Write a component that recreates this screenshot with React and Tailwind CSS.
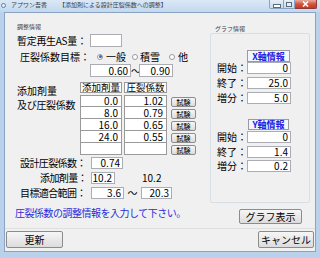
import React from "react"

const jp = "font-['Noto_Sans_CJK_JP','Noto_Sans_CJK_SC',sans-serif]"

function Field({ w, h = "h-[12px]", children, className = "" }) {
  return (
    <div
      className={`${w} ${h} flex shrink-0 items-center justify-end border border-[#abadb3] bg-white pr-[2px] text-[10px] leading-[10px] text-black ${className}`}
    >
      {children}
    </div>
  )
}

function Btn({ className = "", children }) {
  return (
    <div
      className={`flex shrink-0 items-center justify-center rounded-[2px] border border-[#8c8c8c] bg-gradient-to-b from-[#f6f6f6] to-[#dcdcdc] text-black ${className}`}
    >
      {children}
    </div>
  )
}

function Radio({ on }) {
  return (
    <div className="flex h-[6px] w-[6px] shrink-0 items-center justify-center rounded-full border border-[#9a9a9a] bg-white">
      {on && <div className="h-[3px] w-[3px] rounded-full bg-[#2a6fcf]" />}
    </div>
  )
}

function AxisRow({ label, value, mt }) {
  return (
    <div className={`flex h-[12px] items-center ${mt}`}>
      <span className="w-[36px] shrink-0 pl-[6px] text-[10px] leading-[12px]">{label}</span>
      <Field w="w-[44px]">{value}</Field>
    </div>
  )
}

const rows = [
  ["0.0", "1.02"],
  ["8.0", "0.79"],
  ["16.0", "0.65"],
  ["24.0", "0.55"],
  ["", ""],
]

export default function App() {
  return (
    <div className={`flex h-[258px] w-[320px] flex-col overflow-hidden whitespace-nowrap bg-[#b9d1ea] ${jp}`}>
      {/* title bar */}
      <div className="flex h-[12px] items-start bg-gradient-to-b from-[#dbe8f6] to-[#c3d8ee]">
        <div className="ml-[1px] mt-[3px] h-[5px] w-[5px] rounded-full border border-[#5b7fa8] bg-[#e8f0f8]" />
        <span className="ml-[5px] mt-[1px] text-[6px] leading-[8px] text-[#3c3c3c]">アプワン吾香</span>
        <span className="ml-[12px] mt-[1px] text-[6px] leading-[8px] text-[#3c3c3c]">【添加剤による設計圧裂係数への調整】</span>
        <div className="ml-auto mr-[3px] flex h-[9px]">
          <div className="flex w-[15px] items-center justify-center rounded-bl-[2px] border border-t-0 border-[#8aa3c0] bg-gradient-to-b from-[#e6eef7] to-[#c9d9eb]">
            <div className="mt-[3px] h-[2px] w-[6px] bg-white shadow-[0_0_0_1px_#5a6b80]" />
          </div>
          <div className="flex w-[11px] items-center justify-center border-b border-r border-[#8aa3c0] bg-gradient-to-b from-[#e6eef7] to-[#c9d9eb]">
            <div className="h-[5px] w-[6px] border border-[#5a6b80] bg-[#e6eef7]" />
          </div>
          <div className="flex w-[22px] items-center justify-center rounded-br-[2px] border border-l-0 border-t-0 border-[#8d3a32] bg-gradient-to-b from-[#e9a99c] via-[#d2533f] to-[#c33a27]">
            <svg width="7" height="6" viewBox="0 0 7 6">
              <path d="M1 0.5 L6 5.5 M6 0.5 L1 5.5" stroke="white" strokeWidth="1.6" />
            </svg>
          </div>
        </div>
      </div>

      {/* client area */}
      <div className="mx-[4px] flex h-[240px] flex-col border border-[#8aa3c0] bg-[#f0f0f0] text-black">
        <div className="flex h-[215px]">
          {/* left side */}
          <div className="flex w-[197px] shrink-0 flex-col">
            <span className="ml-[12px] mt-[10px] h-[8px] text-[6px] leading-[8px] text-[#3c3c3c]">調整情報</span>

            <div className="mt-[3px] flex h-[13px] items-center">
              <span className="ml-[12px] w-[73px] shrink-0 text-[10px] leading-[13px] tracking-[-0.3px]">暫定再生AS量：</span>
              <Field w="w-[32px]" h="h-[13px]" />
            </div>

            <div className="mt-[3px] flex h-[13px] items-center text-[10px] leading-[13px]">
              <span className="ml-[15px] w-[77px] shrink-0">圧裂係数目標：</span>
              <Radio on />
              <span className="ml-[3px] w-[26px] shrink-0">一般</span>
              <Radio />
              <span className="ml-[2px] w-[29px] shrink-0">積雪</span>
              <Radio />
              <span className="ml-[3px]">他</span>
            </div>

            <div className="mt-[1px] flex h-[13px] items-center">
              <Field w="ml-[85px] w-[41px]" h="h-[13px]">0.60</Field>
              <span className="w-[8px] text-center text-[10px] leading-[13px]">～</span>
              <Field w="w-[34px]" h="h-[13px]">0.90</Field>
            </div>

            {/* table */}
            <div className="mt-[5px] flex">
              <div className="ml-[12px] w-[63px] shrink-0 pt-[2px] text-[10px] leading-[14px]">
                <div>添加剤量</div>
                <div className="tracking-[-0.3px]">及び圧裂係数</div>
              </div>
              <div className="flex flex-col">
                <div className="flex gap-[2px]">
                  <div className="flex h-[11px] w-[42px] items-center justify-center border border-[#9a9a9a] bg-white text-[9.5px] leading-[9px]">添加剤量</div>
                  <div className="flex h-[11px] w-[43px] items-center justify-center border border-[#9a9a9a] bg-white text-[9.5px] leading-[9px]">圧裂係数</div>
                </div>
                <div className="mt-[2px] flex flex-col">
                  {rows.map((r, i) => (
                    <div key={i} className="flex gap-[2px]">
                      <div className={`flex h-[12px] w-[42px] items-center justify-end border-x border-b border-[#9a9a9a] bg-white pr-[3px] text-[10px] leading-[10px] ${i === 0 ? "border-t" : ""}`}>{r[0]}</div>
                      <div className={`flex h-[12px] w-[43px] items-center justify-end border-x border-b border-[#9a9a9a] bg-white pr-[3px] text-[10px] leading-[10px] ${i === 0 ? "border-t" : ""}`}>{r[1]}</div>
                    </div>
                  ))}
                </div>
              </div>
              <div className="ml-[4px] flex flex-col gap-[2px] pt-[15px]">
                {rows.map((_, i) => (
                  <Btn key={i} className="h-[10px] w-[25px] text-[7px] leading-[8px]">試験</Btn>
                ))}
              </div>
            </div>

            <div className="mt-[2px] flex h-[12px] items-center">
              <span className="ml-[15px] w-[71px] shrink-0 text-[10px] leading-[12px] tracking-[-0.6px]">設計圧裂係数：</span>
              <Field w="w-[32px]">0.74</Field>
            </div>

            <div className="mt-[3px] flex h-[12px] items-center">
              <span className="ml-[35px] w-[51px] shrink-0 text-[10px] leading-[12px] tracking-[-0.6px]">添加剤量：</span>
              <Field w="w-[24px]">10.2</Field>
              <span className="ml-[27px] text-[10px] leading-[12px]">10.2</span>
            </div>

            <div className="mt-[3px] flex h-[12px] items-center">
              <span className="ml-[15px] w-[71px] shrink-0 text-[10px] leading-[12px] tracking-[-0.6px]">目標適合範囲：</span>
              <Field w="w-[33px]">3.6</Field>
              <span className="w-[17px] text-center text-[10px] leading-[12px]">～</span>
              <Field w="w-[31px]">20.3</Field>
            </div>

            <span className="ml-[10px] mt-[8px] text-[10px] leading-[12px] tracking-[-0.5px] text-[#2b2bd8]">
              圧裂係数の調整情報を入力して下さい。
            </span>
          </div>

          {/* right side */}
          <div className="flex flex-col">
            <span className="ml-[13px] mt-[12px] h-[7px] text-[6px] leading-[7px] text-[#3c3c3c]">グラフ情報</span>
            <div className="ml-[8px] mt-[1px] flex h-[170px] w-[100px] flex-col rounded-[2px] border border-[#d5dfe5]">
              <div className="ml-[36px] mt-[16px] flex h-[12px] w-[43px] items-center justify-center border border-[#9a9a9a] bg-[#f4f6ff] text-[9px] font-bold leading-[9px] text-[#2020e0]">
                X軸情報
              </div>
              <AxisRow label="開始：" value="0" mt="" />
              <AxisRow label="終了：" value="25.0" mt="mt-[3px]" />
              <AxisRow label="増分：" value="5.0" mt="mt-[3px]" />
              <div className="ml-[37px] mt-[15px] flex h-[11px] w-[41px] items-center justify-center border border-[#9a9a9a] bg-[#f4f6ff] text-[9px] font-bold leading-[9px] text-[#2020e0]">
                Y軸情報
              </div>
              <AxisRow label="開始：" value="0" mt="mt-[1px]" />
              <AxisRow label="終了：" value="1.4" mt="mt-[3px]" />
              <AxisRow label="増分：" value="0.2" mt="mt-[2px]" />
            </div>
            <Btn className="ml-[37px] mt-[6px] h-[15px] w-[63px] text-[10px] leading-[12px]">グラフ表示</Btn>
          </div>
        </div>

        <div className="h-px bg-[#dfdfdf]" />

        <div className="mt-[2px] flex">
          <Btn className="ml-[1px] h-[17px] w-[57px] text-[10px] leading-[12px]">更新</Btn>
          <Btn className="ml-auto mr-[1px] h-[17px] w-[56px] text-[10px] leading-[12px]">キャンセル</Btn>
        </div>
      </div>
    </div>
  )
}
